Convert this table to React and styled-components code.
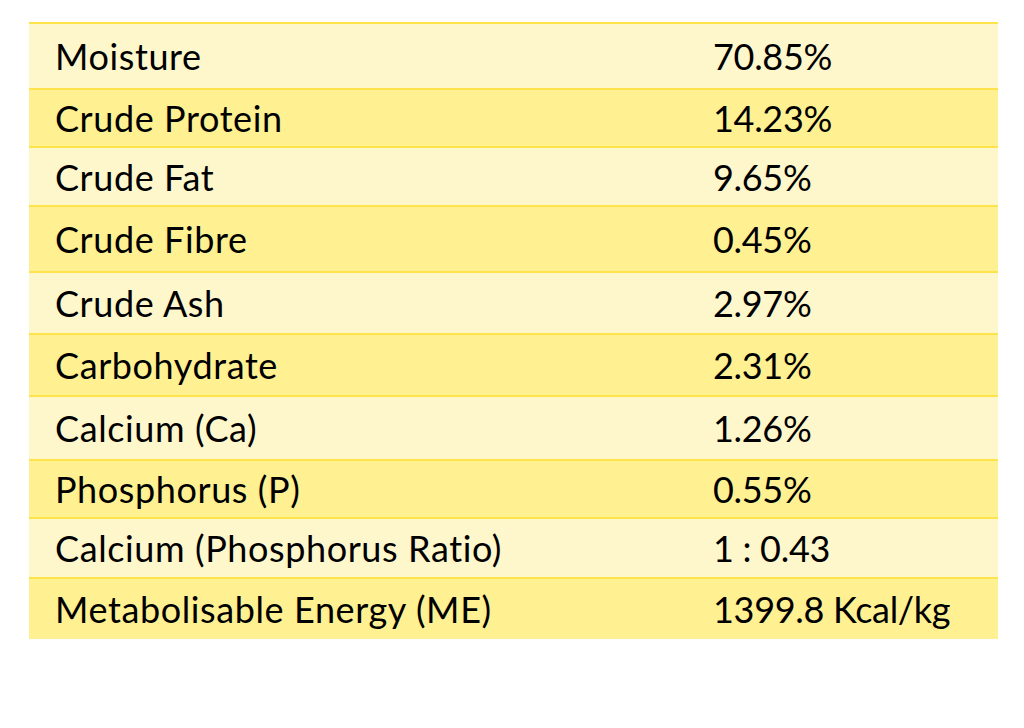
import styled, { createGlobalStyle } from "styled-components";

const rows = [
  { label: "Moisture", value: "70.85%", h: 66 },
  { label: "Crude Protein", value: "14.23%", h: 58 },
  { label: "Crude Fat", value: "9.65%", h: 59 },
  { label: "Crude Fibre", value: "0.45%", h: 66 },
  { label: "Crude Ash", value: "2.97%", h: 62 },
  { label: "Carbohydrate", value: "2.31%", h: 62 },
  { label: "Calcium (Ca)", value: "1.26%", h: 64 },
  { label: "Phosphorus (P)", value: "0.55%", h: 58 },
  { label: "Calcium (Phosphorus Ratio)", value: "1 : 0.43", h: 60 },
  { label: "Metabolisable Energy (ME)", value: "1399.8 Kcal/kg", h: 62 },
];

const GlobalStyle = createGlobalStyle`
  html, body {
    margin: 0;
    padding: 0;
    background: #ffffff;
  }
`;

const Page = styled.div`
  width: 1024px;
  height: 728px;
  padding: 22px 0 0 29px;
  box-sizing: border-box;
  background: #ffffff;
`;

const Table = styled.div`
  width: 969px;
  display: flex;
  flex-direction: column;
`;

const Row = styled.div`
  display: grid;
  grid-template-columns: 684px 1fr;
  align-items: center;
  box-sizing: border-box;
  height: ${(p) => p.$h}px;
  border-top: 2px solid #ffe34a;
  background-color: ${(p) => (p.$dark ? "#fff092" : "#fff7cc")};
`;

const Cell = styled.div`
  padding-left: ${(p) => (p.$value ? "0" : "26px")};
  font-family: Lato, "Open Sans", sans-serif;
  font-size: 36px;
  letter-spacing: ${(p) => (p.$value ? "-0.3px" : "0.6px")};
  line-height: 1;
  color: #000000;
  white-space: nowrap;
`;

const App = () => {
  return (
    <>
      <GlobalStyle />
      <Page>
        <Table>
          {rows.map((r, i) => (
            <Row key={r.label} $h={r.h} $dark={i % 2 === 1}>
              <Cell>{r.label}</Cell>
              <Cell $value>{r.value}</Cell>
            </Row>
          ))}
        </Table>
      </Page>
    </>
  );
};

export default App;
